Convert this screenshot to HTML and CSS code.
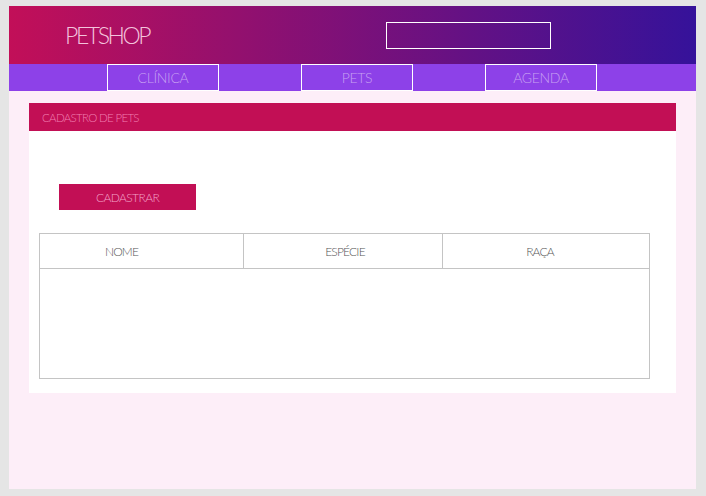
FILE: index.html
```html
<!DOCTYPE html>
<html lang="pt-BR">
<head>
<meta charset="utf-8">
<title>PetShop</title>
<link rel="stylesheet" href="styles.css">
</head>
<body>
<div class="page">
  <header class="topbar">
    <div class="logo">PETSHOP</div>
    <input class="search" type="text">
  </header>
  <nav class="menu">
    <a class="menu-item item-1" href="#">CLÍNICA</a>
    <a class="menu-item item-2" href="#">PETS</a>
    <a class="menu-item item-3" href="#">AGENDA</a>
  </nav>
  <main class="content">
    <section class="card">
      <div class="card-title">CADASTRO DE PETS</div>
      <div class="card-body">
        <button class="btn" type="button">CADASTRAR</button>
        <table class="grid">
          <thead>
            <tr>
              <th class="col-nome">NOME</th>
              <th class="col-especie">ESPÉCIE</th>
              <th class="col-raca">RAÇA</th>
            </tr>
          </thead>
          <tbody>
            <tr><td class="empty" colspan="3"></td></tr>
          </tbody>
        </table>
      </div>
    </section>
  </main>
</div>
</body>
</html>
```

FILE: styles.css
```css
html, body {
  margin: 0;
  padding: 0;
  background: #e5e5e5;
}
body {
  font-family: "Lato", "Open Sans", sans-serif;
  font-weight: 300;
}
.page {
  margin: 6px 10px 0 9px;
  height: 483px;
  background: #fdeef8;
  display: flex;
  flex-direction: column;
}
.topbar {
  height: 58px;
  background: linear-gradient(to right, #c20f58, #35129a);
  display: flex;
  align-items: center;
}
.logo {
  flex: 0 0 321px;
  margin-left: 56px;
  font-size: 23px;
  color: #f3c3dc;
  font-weight: 300;
  letter-spacing: -2.4px;
}
.search {
  width: 165px;
  height: 27px;
  box-sizing: border-box;
  border: 1px solid #ffffff;
  background: transparent;
  outline: none;
  padding: 0;
}
.menu {
  height: 27px;
  background: #8d41e8;
  display: flex;
  align-items: flex-start;
}
.menu-item {
  width: 112px;
  height: 27px;
  box-sizing: border-box;
  border: 1px solid #ffffff;
  color: #c7a0f2;
  text-decoration: none;
  font-size: 14px;
  letter-spacing: -0.3px;
  display: flex;
  align-items: center;
  justify-content: center;
}
.item-1 { margin-left: 98px; }
.item-2 { margin-left: 82px; }
.item-3 { margin-left: 72px; }
.content {
  padding: 12px 20px 0 20px;
}
.card {
  background: #ffffff;
}
.card-title {
  height: 28px;
  background: #c20f55;
  color: #f17fb1;
  font-size: 11.5px;
  letter-spacing: -0.7px;
  padding-left: 13px;
  display: flex;
  align-items: center;
}
.card-body {
  padding: 53px 0 14px 10px;
}
.btn {
  display: block;
  margin-left: 20px;
  width: 137px;
  height: 26px;
  border: none;
  background: #c20f55;
  color: #f3a2c8;
  font-family: inherit;
  font-weight: 300;
  font-size: 12px;
  letter-spacing: -0.6px;
  padding: 0;
}
.grid {
  margin-top: 23px;
  width: 607px;
  border-collapse: collapse;
  border: 1px solid #c4c4c4;
  table-layout: fixed;
}
.grid th {
  height: 34px;
  padding: 0;
  font-weight: 300;
  font-size: 12px;
  letter-spacing: -0.8px;
  color: #555555;
  border-bottom: 1px solid #c4c4c4;
  border-right: 1px solid #c4c4c4;
  text-align: center;
}
.grid th:last-child { border-right: none; }
.grid th.col-nome { width: 163px; padding-right: 40px; }
.grid th.col-especie { width: 194px; padding-left: 4px; }
.grid th.col-raca { width: 194px; padding-right: 12px; }
.empty {
  height: 109px;
  padding: 0;
}
```
